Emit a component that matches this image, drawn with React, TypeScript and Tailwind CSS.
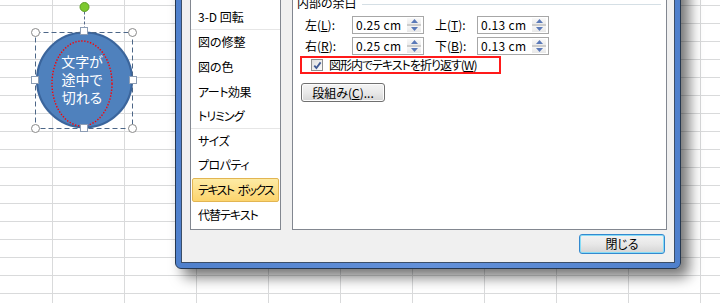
import React from 'react';

type Item = { t: string; sep?: boolean; active?: boolean; track?: string };

const items: Item[] = [
  { t: '塗りつぶし' },
  { t: '線の色' },
  { t: '線のスタイル', track: 'tracking-[-1px]' },
  { t: '影' },
  { t: '光彩とぼかし' },
  { t: '3-D 書式' },
  { t: '3-D 回転', sep: true },
  { t: '図の修整' },
  { t: '図の色' },
  { t: 'アート効果', track: 'tracking-[-0.5px]' },
  { t: 'トリミング', sep: true, track: 'tracking-[-1px]' },
  { t: 'サイズ', track: 'tracking-[-0.5px]' },
  { t: 'プロパティ', track: 'tracking-[-0.5px]' },
  { t: 'テキスト ボックス', active: true, track: 'tracking-[-1.6px] [word-spacing:3px]' },
  { t: '代替テキスト', track: 'tracking-[-1px]' },
];

function SideList() {
  return (
    <div className="flex h-full w-[91px] shrink-0 flex-col overflow-hidden border border-[#828790] bg-white pt-[2px]">
      {items.map((it) => (
        <div
          key={it.t}
          className={
            it.sep
              ? 'flex h-[24.6px] shrink-0 flex-col border-b border-[#e6e6e6]'
              : 'flex h-[24.6px] shrink-0 flex-col'
          }
        >
          <div
            className={
              it.active
                ? 'mx-[1px] flex flex-1 items-center whitespace-nowrap rounded-[2px] border border-[#e2b552] bg-linear-to-b from-[#fdeba4] to-[#fcd46c] pl-[5px] text-[12px] leading-none'
                : 'mx-[1px] flex flex-1 items-center whitespace-nowrap rounded-[2px] border border-transparent pl-[5px] text-[12px] leading-none'
            }
          >
            <span className={it.track ?? ''}>{it.t}</span>
          </div>
        </div>
      ))}
    </div>
  );
}

function Spin() {
  return (
    <div className="my-[1px] mr-[2px] flex h-[14px] w-[14px] flex-col">
      <div className="flex flex-1 items-center justify-center border-b-2 border-[#cccccc] bg-linear-to-b from-[#f9f9f9] to-[#ececec]">
        <svg width="7" height="4" viewBox="0 0 7 4">
          <path d="M3.5 0L7 4H0z" fill="#5a79b8" />
        </svg>
      </div>
      <div className="flex flex-1 items-center justify-center bg-linear-to-b from-[#f6f6f6] to-[#e8e8e8]">
        <svg width="7" height="4" viewBox="0 0 7 4">
          <path d="M0 0H7L3.5 4z" fill="#5a79b8" />
        </svg>
      </div>
    </div>
  );
}

function NumField({ value }: { value: string }) {
  return (
    <div className="flex h-[18px] w-[72px] shrink-0 items-center border border-[#a7a7a7] bg-white">
      <span className="flex-1 pl-[3px] text-[12px] leading-none tracking-[0.3px]">{value}</span>
      <Spin />
    </div>
  );
}

function Check({ checked }: { checked?: boolean }) {
  return (
    <div className="flex h-[12px] w-[12px] shrink-0 items-center justify-center border border-[#8e8f8f] bg-linear-to-br from-[#dedede] to-[#fbfbfb]">
      {checked && (
        <svg width="9" height="9" viewBox="0 0 9 9">
          <path d="M1.3 4.6L3.4 7L7.6 1.4" stroke="#3f5a95" strokeWidth="1.8" fill="none" />
        </svg>
      )}
    </div>
  );
}

function GroupHeader({ label }: { label: string }) {
  return (
    <div className="flex h-[14px] shrink-0 items-center pl-[4px] pr-[5px]">
      <span className="whitespace-nowrap text-[12px] leading-none">{label}</span>
      <div className="ml-[5px] mt-[2px] h-px flex-1 bg-[#d5dfe5]" />
    </div>
  );
}

function Select({ value }: { value: string }) {
  return (
    <div className="flex h-[21px] w-[90px] items-center justify-between border border-[#a7a7a7] bg-white pl-[3px] pr-[3px] text-[12px] leading-none">
      {value}
      <span className="text-[8px]">▼</span>
    </div>
  );
}

function RightPanel() {
  return (
    <div className="flex h-full w-[375px] shrink-0 flex-col overflow-hidden border border-[#828790] bg-white pt-[6px]">
      <div className="flex h-[134px] shrink-0 flex-col overflow-hidden">
        <GroupHeader label="テキストのレイアウト" />
        <div className="mt-[6px] flex h-[21px] items-center pl-[12px] text-[12px] leading-none">
          <span className="w-[130px]">垂直方向の配置(<span className="underline">V</span>):</span>
          <Select value="上" />
        </div>
        <div className="mt-[4px] flex h-[21px] items-center pl-[12px] text-[12px] leading-none">
          <span className="w-[130px]">文字列の方向(<span className="underline">X</span>):</span>
          <Select value="横書き" />
        </div>
        <div className="mt-[4px] flex h-[18px] items-center gap-[6px] pl-[12px] text-[12px] leading-none">
          <Check />
          <span>テキストを回転させない(<span className="underline">D</span>)</span>
        </div>
        <div className="mt-[8px]">
          <GroupHeader label="自動調整" />
        </div>
        <div className="mt-[6px] flex h-[18px] items-center gap-[6px] pl-[12px] text-[12px] leading-none">
          <Check />
          <span>テキストに合わせて図形のサイズを調整する(<span className="underline">F</span>)</span>
        </div>
      </div>

      <GroupHeader label="内部の余白" />

      <div className="mt-[6px] flex h-[18px] shrink-0 items-center pl-[12px] text-[12px] leading-none">
        <span className="w-[47px] shrink-0">左(<span className="underline">L</span>):</span>
        <NumField value="0.25 cm" />
        <span className="ml-[11px] w-[42px] shrink-0">上(<span className="underline">T</span>):</span>
        <NumField value="0.13 cm" />
      </div>
      <div className="mt-[3px] flex h-[18px] shrink-0 items-center pl-[12px] text-[12px] leading-none">
        <span className="w-[47px] shrink-0">右(<span className="underline">R</span>):</span>
        <NumField value="0.25 cm" />
        <span className="ml-[11px] w-[42px] shrink-0">下(<span className="underline">B</span>):</span>
        <NumField value="0.13 cm" />
      </div>

      <div className="ml-[7px] mt-[1px] flex h-[18px] w-[201px] shrink-0 items-center gap-[6px] border-2 border-[#ff1a1a] pl-[9px] text-[12px] leading-none">
        <Check checked />
        <span className="whitespace-nowrap tracking-[-1px]">
          図形内でテキストを折り返す(<span className="underline">W</span>)
        </span>
      </div>

      <div className="ml-[8px] mt-[9px] flex h-[19px] w-[84px] shrink-0 items-center justify-center rounded-[3px] border border-[#707070] bg-linear-to-b from-[#f4f4f4] via-[#e9e9e9] to-[#d6d6d6] text-[12px] leading-none shadow-[inset_0_0_0_1px_#fcfcfc]">
        段組み(<span className="underline">C</span>)...
      </div>
    </div>
  );
}

function Shape() {
  return (
    <>
      <svg className="absolute left-0 top-0" width="150" height="140" viewBox="0 0 150 140">
        <line x1="84.5" y1="11.5" x2="84.5" y2="27.5" stroke="#55698a" strokeDasharray="3 2" />
        <circle cx="84.5" cy="80" r="47.5" fill="#4f81bd" stroke="#3b659c" strokeWidth="2.2" />
        <ellipse
          cx="82"
          cy="83.5"
          rx="30"
          ry="42.5"
          fill="none"
          stroke="#ff0000"
          strokeWidth="1.4"
          strokeDasharray="1.4 1.6"
        />
        <rect
          x="35.5"
          y="32.5"
          width="97"
          height="96"
          fill="none"
          stroke="#4c6687"
          strokeDasharray="5 3"
        />
        <circle cx="35.5" cy="32.5" r="4" fill="#ffffff" stroke="#8a8a8a" />
        <circle cx="132.5" cy="32.5" r="4" fill="#ffffff" stroke="#8a8a8a" />
        <circle cx="35.5" cy="128.5" r="4" fill="#ffffff" stroke="#8a8a8a" />
        <circle cx="132.5" cy="128.5" r="4" fill="#ffffff" stroke="#8a8a8a" />
        <rect x="80.5" y="27.5" width="7" height="7" fill="#ffffff" stroke="#8d9db4" />
        <rect x="31.5" y="76.5" width="7" height="7" fill="#ffffff" stroke="#8d9db4" />
        <rect x="129.5" y="76.5" width="7" height="7" fill="#ffffff" stroke="#8d9db4" />
        <rect x="80.5" y="124.5" width="7" height="7" fill="#ffffff" stroke="#8d9db4" />
        <circle cx="84.5" cy="7" r="4.5" fill="#7dc92f" stroke="#5d9d26" />
      </svg>
      <div className="absolute left-[52px] top-[52px] flex w-[60px] flex-col items-center text-[14px] leading-[18px] text-white">
        <span className="h-[18px]">文字が</span>
        <span className="h-[18px]">途中で</span>
        <span className="h-[18px]">切れる</span>
      </div>
    </>
  );
}

export default function App() {
  return (
    <div className="relative h-[303px] w-[720px] overflow-hidden bg-white bg-[image:linear-gradient(to_right,#d9dadb_1px,transparent_1px),linear-gradient(to_bottom,#d9dadb_1px,transparent_1px)] bg-[length:72px_18px] bg-[position:52px_5px] font-['Noto_Sans_CJK_JP','Noto_Sans',sans-serif] text-black [font-feature-settings:'palt']">
      <Shape />
      <div className="absolute left-[175px] top-[-160px] h-[429px] w-[506px] rounded-b-[6px] border border-[#25374f] bg-linear-to-r from-[#4f80cc] via-[#6391da] to-[#4f80cc] p-[5px] shadow-[8px_8px_14px_rgba(0,0,0,0.55)]">
        <div className="flex h-full flex-col border border-[#3b4e68] bg-[#f0f0f0] pb-[8px] pl-[8px] pr-[7px] pt-[8px]">
          <div className="flex h-[375px] shrink-0 gap-[11px]">
            <SideList />
            <RightPanel />
          </div>
          <div className="mt-[4px] flex shrink-0 justify-end pr-[2px]">
            <div className="flex h-[20px] w-[86px] items-center justify-center rounded-[3px] border border-[#3489cf] bg-linear-to-b from-[#f3f3f3] via-[#e8e8e8] to-[#d4d4d4] text-[12px] leading-none shadow-[inset_0_0_0_1px_#86dcf6]">
              閉じる
            </div>
          </div>
        </div>
      </div>
    </div>
  );
}
